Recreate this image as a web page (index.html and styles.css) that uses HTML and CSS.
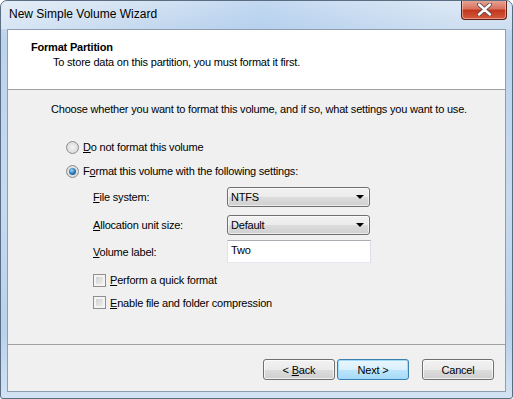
FILE: index.html
```html
<!DOCTYPE html>
<html lang="en">
<head>
    <meta charset="UTF-8">
    <title>New Simple Volume Wizard</title>
    <link rel="stylesheet" href="styles.css">
</head>
<body>
    <div class="window">
        <div class="titlebar">
            <span class="title">New Simple Volume Wizard</span>
            <div class="close-btn">
                <svg width="15" height="13" viewBox="0 0 15 13">
                    <path d="M2 1.5 L7.5 6.5 L13 1.5 M2 11.5 L7.5 6.5 L13 11.5" stroke="#5a4a4a" stroke-width="4.2" fill="none" stroke-linecap="round"/>
                    <path d="M2 1.5 L7.5 6.5 L13 1.5 M2 11.5 L7.5 6.5 L13 11.5" stroke="#fff" stroke-width="2.4" fill="none" stroke-linecap="round"/>
                </svg>
            </div>
        </div>

        <div class="client">
            <div class="header">
                <div class="header-title">Format Partition</div>
                <div class="header-sub">To store data on this partition, you must format it first.</div>
            </div>

            <div class="content">
                <div class="intro">Choose whether you want to format this volume, and if so, what settings you want to use.</div>

                <div class="option-row">
                    <span class="radio"></span>
                    <span><u>D</u>o not format this volume</span>
                </div>
                <div class="option-row">
                    <span class="radio checked"></span>
                    <span>F<u>o</u>rmat this volume with the following settings:</span>
                </div>

                <div class="field-row row-fs">
                    <span class="field-label"><u>F</u>ile system:</span>
                    <div class="combo"><span>NTFS</span><span class="arrow"></span></div>
                </div>
                <div class="field-row row-alloc">
                    <span class="field-label"><u>A</u>llocation unit size:</span>
                    <div class="combo"><span>Default</span><span class="arrow"></span></div>
                </div>
                <div class="field-row row-label">
                    <span class="field-label"><u>V</u>olume label:</span>
                    <div class="textbox">Two</div>
                </div>

                <div class="check-row first">
                    <span class="checkbox"></span>
                    <span><u>P</u>erform a quick format</span>
                </div>
                <div class="check-row">
                    <span class="checkbox"></span>
                    <span><u>E</u>nable file and folder compression</span>
                </div>
            </div>

            <div class="footer">
                <div class="btn back"><span>&lt; <u>B</u>ack</span></div>
                <div class="btn default"><span>Next &gt;</span></div>
                <div class="btn cancel"><span>Cancel</span></div>
            </div>
        </div>
    </div>
</body>
</html>
```

FILE: styles.css
```css
body {
    margin: 0;
    background: #ffffff;
    font-family: "Liberation Sans", Arial, sans-serif;
    font-size: 11px;
    letter-spacing: -0.2px;
    color: #000;
}
.window {
    width: 513px;
    height: 399px;
    box-sizing: border-box;
    border: 1px solid #5b6d83;
    border-radius: 7px 7px 3px 3px;
    background: linear-gradient(180deg, #d6e4f3 0px, #bcd3ed 40px, #c6dbf1 200px, #b9d1ec 330px, #d3e3f4 399px);
    display: flex;
    flex-direction: column;
    overflow: hidden;
}
.titlebar {
    height: 28px;
    display: flex;
    align-items: flex-start;
    justify-content: space-between;
    background: linear-gradient(90deg, rgba(255,255,255,0.35) 0px, rgba(255,255,255,0) 140px, rgba(150,190,235,0.3) 260px, rgba(255,255,255,0.15) 450px);
}
.title {
    font-size: 12px;
    letter-spacing: 0;
    padding-left: 8px;
    margin-top: 6px;
    line-height: 15px;
}
.close-btn {
    width: 46px;
    height: 20px;
    margin-right: 5px;
    margin-top: -1px;
    box-sizing: border-box;
    border: 1px solid #5e1f16;
    border-top: none;
    border-radius: 0 0 4px 4px;
    background: linear-gradient(180deg, #e9a899 0%, #d9735f 45%, #c2381f 55%, #d4593c 100%);
    box-shadow: inset 0 0 0 1px rgba(255,220,210,0.5);
    display: flex;
    align-items: center;
    justify-content: center;
}
.client {
    margin: 0 6px;
    height: 363px;
    box-sizing: border-box;
    border: 1px solid #8e9db0;
    background: #f0f0f0;
    display: flex;
    flex-direction: column;
}
.header {
    background: #ffffff;
    border-bottom: 1px solid #a0a0a0;
    padding: 10px 0 0 23px;
    height: 49px;
    line-height: 15px;
}
.header-title {
    font-weight: bold;
}
.header-sub {
    padding-left: 22px;
}
.content {
    height: 254px;
    padding-top: 12px;
    box-sizing: border-box;
    line-height: 14px;
}
.intro {
    padding-left: 43px;
    margin-bottom: 19px;
}
.option-row {
    height: 24px;
    display: flex;
    align-items: center;
    padding-left: 58px;
}
.radio {
    width: 13px;
    height: 13px;
    box-sizing: border-box;
    border-radius: 50%;
    border: 1px solid #8b8b8b;
    background: radial-gradient(circle at 50% 50%, #f4f4f4 0%, #dcdcdc 70%, #f6f6f6 100%);
    margin-right: 4px;
    position: relative;
}
.radio.checked::after {
    content: "";
    position: absolute;
    left: 2px;
    top: 2px;
    width: 7px;
    height: 7px;
    border-radius: 50%;
    background: radial-gradient(circle at 40% 35%, #a9d9f7 0%, #2f83c4 45%, #17406a 100%);
}
.field-row {
    display: flex;
    align-items: center;
    padding-left: 85px;
}
.row-fs { height: 27px; }
.row-alloc { height: 29px; }
.row-label { height: 25px; }
.field-label {
    width: 134px;
}
.combo {
    width: 143px;
    height: 20px;
    box-sizing: border-box;
    border: 1px solid #707070;
    border-radius: 3px;
    background: linear-gradient(180deg, #f2f2f2 0%, #ebebeb 50%, #dddddd 50%, #cfcfcf 100%);
    box-shadow: inset 0 0 0 1px rgba(255,255,255,0.6);
    padding: 0 5px 0 3px;
    display: flex;
    align-items: center;
    justify-content: space-between;
}
.arrow {
    width: 0;
    height: 0;
    border-left: 4px solid transparent;
    border-right: 4px solid transparent;
    border-top: 4px solid #000;
}
.textbox {
    width: 144px;
    height: 23px;
    box-sizing: border-box;
    border: 1px solid #abadb3;
    border-right-color: #dbdfe6;
    border-bottom-color: #e3e9ef;
    border-left-color: #e2e3ea;
    background: #fff;
    padding: 2px 0 0 3px;
}
.check-row {
    display: flex;
    align-items: center;
    padding-left: 85px;
    height: 23px;
}
.check-row.first {
    margin-top: 5px;
    height: 22px;
}
.checkbox {
    width: 13px;
    height: 13px;
    box-sizing: border-box;
    border: 1px solid #8e8f8f;
    background: linear-gradient(135deg, #cbcbcb 0%, #f0f0f0 90%);
    box-shadow: inset 0 0 0 2px #f4f4f4;
    margin-right: 4px;
}
.footer {
    flex: 1;
    border-top: 1px solid #a0a0a0;
    display: flex;
    justify-content: flex-end;
    align-items: flex-start;
    padding: 14px 11px 0 0;
    gap: 2px;
}
.btn {
    width: 72px;
    height: 21px;
    box-sizing: border-box;
    border: 1px solid #707070;
    border-radius: 3px;
    background: linear-gradient(180deg, #f2f2f2 0%, #ebebeb 50%, #dddddd 50%, #cfcfcf 100%);
    box-shadow: inset 0 0 0 1px rgba(255,255,255,0.7);
    display: flex;
    align-items: center;
    justify-content: center;
}
.btn.default {
    border-color: #3c7fb1;
    background: linear-gradient(180deg, #eaf6fd 0%, #d9f0fc 50%, #bee6fd 50%, #a7d9f5 100%);
    box-shadow: inset 0 0 0 1px #9fdcfb;
}
.btn.cancel {
    margin-left: 11px;
}
```
